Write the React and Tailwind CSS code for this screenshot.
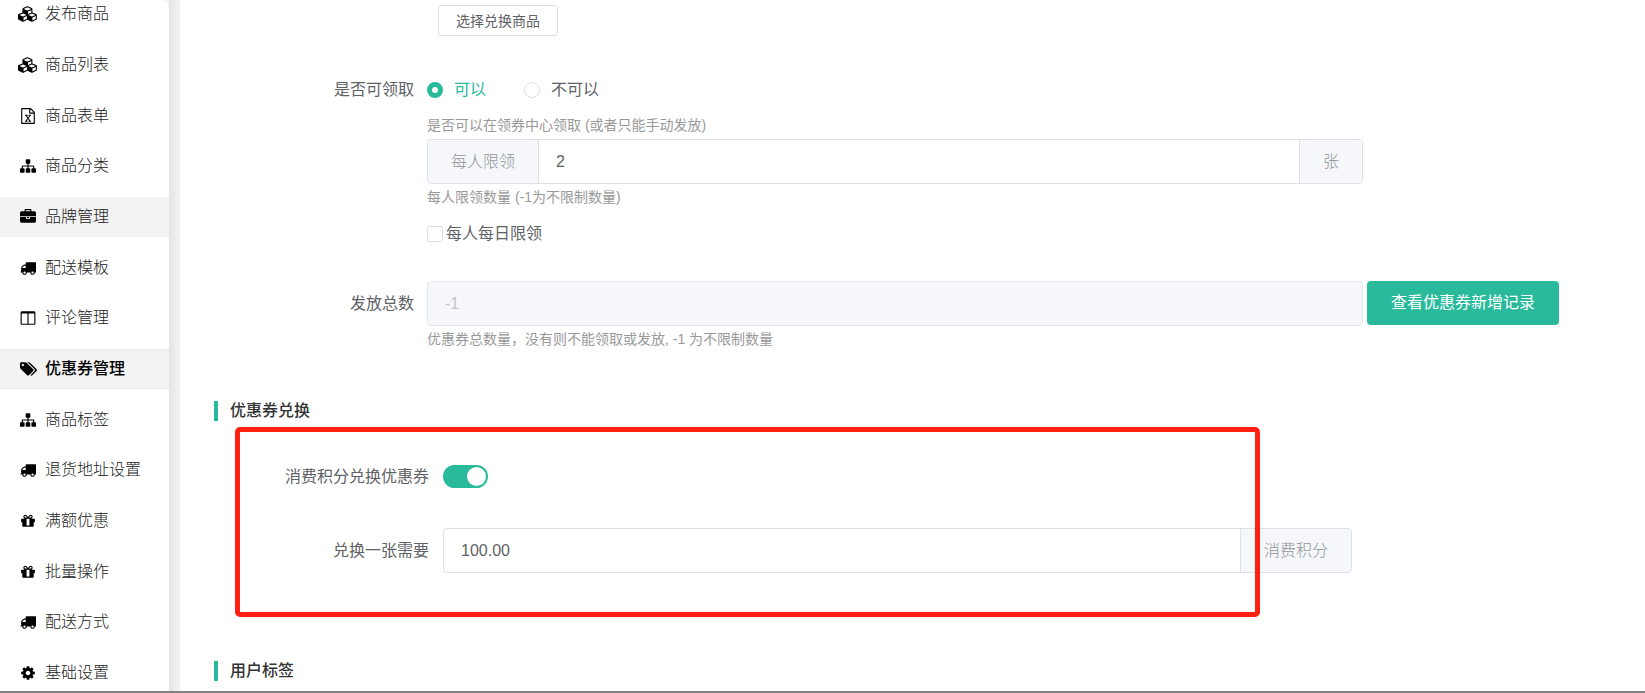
import React, { useState } from "react";

const ICONS = {
  cubes: {
    box: "0 0 2304 1792",
    wide: true,
    d: "M640 1632l384-192v-314l-384 164v342zm-64-454l404-173-404-173-404 173zm1088 454l384-192v-314l-384 164v342zm-64-454l404-173-404-173-404 173zm-448-293l384-165v-266l-384 164v267zm-64-379l441-189-441-189-441 189zm1088 518v416q0 36-19 67t-52 47l-448 224q-25 14-57 14t-57-14l-448-224q-4-2-7-4-2 2-7 4l-448 224q-25 14-57 14t-57-14l-448-224q-33-16-52-47t-19-67v-416q0-38 21.5-70t56.5-48l434-186v-400q0-38 21.5-70t56.5-48l448-192q23-10 50-10t50 10l448 192q35 16 56.5 48t21.5 70v400l434 186q36 16 57 48t21 70z",
  },
  excel: {
    box: "0 0 1792 1792",
    d: "M1596 380q28 28 48 76t20 88v1152q0 40-28 68t-68 28h-1344q-40 0-68-28t-28-68v-1600q0-40 28-68t68-28h896q40 0 88 20t76 48zm-444-244v376h376q-10-29-22-41l-313-313q-12-12-41-22zm384 1528v-1024h-416q-40 0-68-28t-28-68v-416h-768v1536h1280zm-979-234v106h281v-106h-75l103-161q5-7 10-16.5t7.5-13.5 3.5-4h2q1 4 5 10 2 4 4.5 7.5t6 8 6.5 8.5l107 161h-76v106h291v-106h-68l-192-273 195-282h67v-107h-279v107h74l-103 159q-4 7-10 16.5t-9 13.5l-2 3h-2q-1-4-5-10-6-11-17-23l-106-159h76v-107h-290v107h68l189 272-194 283h-68z",
  },
  sitemap: {
    box: "0 0 1792 1792",
    d: "M1792 1248v320q0 40-28 68t-68 28h-320q-40 0-68-28t-28-68v-320q0-40 28-68t68-28h96v-192h-512v192h96q40 0 68 28t28 68v320q0 40-28 68t-68 28h-320q-40 0-68-28t-28-68v-320q0-40 28-68t68-28h96v-192h-512v192h96q40 0 68 28t28 68v320q0 40-28 68t-68 28h-320q-40 0-68-28t-28-68v-320q0-40 28-68t68-28h96v-192q0-52 38-90t90-38h512v-192h-96q-40 0-68-28t-28-68v-320q0-40 28-68t68-28h320q40 0 68 28t28 68v320q0 40-28 68t-68 28h-96v192h512q52 0 90 38t38 90v192h96q40 0 68 28t28 68z",
  },
  briefcase: {
    box: "0 0 1792 1792",
    d: "M640 256h512v-128h-512v128zm1152 640v480q0 66-47 113t-113 47h-1472q-66 0-113-47t-47-113v-480h672v160q0 26 19 45t45 19h320q26 0 45-19t19-45v-160h672zm-768 0v128h-256v-128h256zm768-480v384h-1792v-384q0-66 47-113t113-47h352v-160q0-40 28-68t68-28h576q40 0 68 28t28 68v160h352q66 0 113 47t47 113z",
  },
  truck: {
    box: "0 0 1792 1792",
    d: "M640 1408q0-52-38-90t-90-38-90 38-38 90 38 90 90 38 90-38 38-90zm-384-512h384v-256h-158q-13 0-22 9l-195 195q-9 9-9 22v30zm1280 512q0-52-38-90t-90-38-90 38-38 90 38 90 90 38 90-38 38-90zm256-1088v1024q0 15-4 26.5t-13.5 18.5-16.5 11.5-23.5 6-22.5 2-25.5 0-22.5-.5q0 106-75 181t-181 75-181-75-75-181h-384q0 106-75 181t-181 75-181-75-75-181h-64q-3 0-22.5.5t-25.5 0-22.5-2-23.5-6-16.5-11.5-13.5-18.5-4-26.5q0-26 19-45t45-19v-320q0-8-.5-35t0-38 2.5-34.5 6.5-37 14-30.5 22.5-30l198-198q19-19 50.5-32t58.5-13h160v-192q0-26 19-45t45-19h1024q26 0 45 19t19 45z",
  },
  columns: {
    box: "0 0 1792 1792",
    d: "M224 1536h608v-1152h-640v1120q0 13 9.5 22.5t22.5 9.5zm1376-32v-1120h-640v1152h608q13 0 22.5-9.5t9.5-22.5zm128-1216v1216q0 66-47 113t-113 47h-1344q-66 0-113-47t-47-113v-1216q0-66 47-113t113-47h1344q66 0 113 47t47 113z",
  },
  tags: {
    box: "0 0 2048 1792",
    wide: true,
    d: "M576 448q0-53-37.5-90.5t-90.5-37.5-90.5 37.5-37.5 90.5 37.5 90.5 90.5 37.5 90.5-37.5 37.5-90.5zm1067 576q0 53-37 90l-491 492q-39 37-91 37-53 0-90-37l-715-716q-38-37-64.5-101t-26.5-117v-416q0-52 38-90t90-38h416q53 0 117 26.5t102 64.5l715 714q37 39 37 91zm384 0q0 53-37 90l-491 492q-39 37-91 37-36 0-59-14t-53-45l470-470q37-37 37-90 0-52-37-91l-715-714q-38-38-102-64.5t-117-26.5h224q53 0 117 26.5t102 64.5l715 714q37 39 37 91z",
  },
  gift: {
    box: "0 0 1792 1792",
    d: "M1056 1356v-716h-320v716q0 25 18 38.5t46 13.5h192q28 0 46-13.5t18-38.5zm-456-844h195l-126-161q-26-31-69-31-40 0-68 28t-28 68 28 68 68 28zm688-96q0-40-28-68t-68-28q-43 0-69 31l-125 161h194q40 0 68-28t28-68zm376 256v320q0 14-9 23t-23 9h-96v416q0 40-28 68t-68 28h-1088q-40 0-68-28t-28-68v-416h-96q-14 0-23-9t-9-23v-320q0-14 9-23t23-9h440q-93 0-158.5-65.5t-65.5-158.5 65.5-158.5 158.5-65.5q107 0 168 77l128 165 128-165q61-77 168-77 93 0 158.5 65.5t65.5 158.5-65.5 158.5-158.5 65.5h440q14 0 23 9t9 23z",
  },
  cog: {
    box: "0 0 1792 1792",
    d: "M1152 896q0-106-75-181t-181-75-181 75-75 181 75 181 181 75 181-75 75-181zm512-109v222q0 12-8 23t-20 13l-185 28q-19 54-39 91 35 50 107 138 10 12 10 25t-9 23q-27 37-99 108t-94 71q-12 0-26-9l-138-108q-44 23-91 38-16 136-29 186-7 28-36 28h-222q-14 0-24.5-8.5t-11.5-21.5l-28-184q-49-16-90-37l-141 107q-10 9-25 9-14 0-25-11-126-114-165-168-7-10-7-23 0-12 8-23 15-21 51-66.5t54-70.5q-27-50-41-99l-183-27q-13-2-21-12.5t-8-23.5v-222q0-12 8-23t19-13l186-28q14-46 39-92-40-57-107-138-10-12-10-24 0-10 9-23 26-36 98.5-107.5t94.5-71.5q13 0 26 10l138 107q44-23 91-38 16-136 29-186 7-28 36-28h222q14 0 24.5 8.5t11.5 21.5l28 184q49 16 90 37l142-107q9-9 24-9 13 0 25 10 129 119 165 170 7 8 7 22 0 12-8 23-15 21-51 66.5t-54 70.5q26 50 41 98l183 28q13 2 21 12.5t8 23.5z",
  },
};

const MENU = [
  { icon: "cubes", text: "发布商品" },
  { icon: "cubes", text: "商品列表" },
  { icon: "excel", text: "商品表单" },
  { icon: "sitemap", text: "商品分类" },
  { icon: "briefcase", text: "品牌管理", hovered: true },
  { icon: "truck", text: "配送模板" },
  { icon: "columns", text: "评论管理" },
  { icon: "tags", text: "优惠券管理", active: true },
  { icon: "sitemap", text: "商品标签" },
  { icon: "truck", text: "退货地址设置" },
  { icon: "gift", text: "满额优惠" },
  { icon: "gift", text: "批量操作" },
  { icon: "truck", text: "配送方式" },
  { icon: "cog", text: "基础设置" },
];

function MenuIcon({ name }) {
  const icon = ICONS[name];
  return (
    <span className="flex w-5 shrink-0 justify-center">
      <svg viewBox={icon.box} className={icon.wide ? "h-4 w-5 shrink-0" : "size-4 shrink-0"} fill="currentColor" aria-hidden="true">
        <path d={icon.d} />
      </svg>
    </span>
  );
}

function Sidebar() {
  return (
    <aside className="z-10 w-[169px] shrink-0 overflow-hidden rounded-tr-lg bg-white">
      <ul className="-mt-[6px]">
        {MENU.map((item, i) => (
          <li key={i} className="mb-[11px] nth-[3n]:mb-[10px]">
            <a
              href="#"
              className={
                "flex h-10 items-center gap-[7px] pl-[18px] text-base text-black " +
                (item.active
                  ? "border-y border-[#e6e8ee] bg-[#f3f3f3] font-medium"
                  : item.hovered
                    ? "bg-[#f3f3f3] font-light"
                    : "font-light")
              }
            >
              <MenuIcon name={item.icon} />
              <span className={item.active ? "" : "text-[#222]"}>{item.text}</span>
            </a>
          </li>
        ))}
      </ul>
    </aside>
  );
}

function SectionTitle({ children }) {
  return <h2 className="border-l-4 border-[#29ba9c] pl-3 text-base leading-5 font-medium text-[#333]">{children}</h2>;
}

function Hint({ children }) {
  return <p className="mt-[3px] text-sm leading-5 text-[#999]">{children}</p>;
}

const addon = "flex shrink-0 items-center bg-[#f5f7fa] font-light text-[#909399]";
const field = "flex h-[45px] overflow-hidden rounded border border-[#dcdfe6]";
const radio =
  "size-4 shrink-0 appearance-none rounded-full border border-[#dcdfe6] bg-white checked:border-[5px] checked:border-[#29ba9c]";

export default function App() {
  const [claim, setClaim] = useState("yes");
  const [exchange, setExchange] = useState(true);

  return (
    <div className="flex h-screen flex-col overflow-hidden border-b-2 border-[#808080] bg-white font-['Liberation_Sans','Noto_Sans_CJK_SC',sans-serif] text-base text-[#606266]">
      <div className="flex min-h-0 flex-1 bg-[#f3f3f3]">
        <Sidebar />
        <div className="w-[11px] shrink-0 bg-linear-to-r from-[#e4e4e4] to-[#f3f3f3]" />
        <main className="min-w-0 flex-1 overflow-hidden bg-white pl-[34px]">
          <form onSubmit={(e) => e.preventDefault()}>
            <div className="pt-[5px] pl-[224px]">
              <button type="button" className="flex h-[31px] w-[120px] items-center justify-center rounded-[3px] border border-[#dcdfe6] text-sm">
                选择兑换商品
              </button>
            </div>

            <div className="mt-[42px] flex gap-[13px]">
              <span id="claim-label" className="w-[200px] shrink-0 text-right">是否可领取</span>
              <div className="min-w-0 flex-1 pr-[282px]">
                <div role="radiogroup" aria-labelledby="claim-label" className="flex gap-[38px]">
                  <label className={"flex items-center gap-[11px] " + (claim === "yes" ? "text-[#29ba9c]" : "")}>
                    <input type="radio" name="claim" className={radio} checked={claim === "yes"} onChange={() => setClaim("yes")} />
                    可以
                  </label>
                  <label className={"flex items-center gap-[11px] " + (claim === "no" ? "text-[#29ba9c]" : "")}>
                    <input type="radio" name="claim" className={radio} checked={claim === "no"} onChange={() => setClaim("no")} />
                    不可以
                  </label>
                </div>
                <p className="mt-[13px] mb-1 text-sm leading-5 text-[#999]">是否可以在领券中心领取 (或者只能手动发放)</p>
                <div className={field}>
                  <label htmlFor="per-person" className={addon + " border-r border-[#dcdfe6] px-[23px]"}>每人限领</label>
                  <input id="per-person" defaultValue="2" className="min-w-0 flex-1 px-[17px] outline-none" />
                  <span className={addon + " border-l border-[#dcdfe6] px-[23px]"}>张</span>
                </div>
                <Hint>每人限领数量 (-1为不限制数量)</Hint>
                <label className="mt-[15px] flex items-center gap-[3px]">
                  <input type="checkbox" className="size-4 appearance-none rounded-[2px] border border-[#dcdfe6] bg-white checked:bg-[#29ba9c]" />
                  每人每日限领
                </label>
              </div>
            </div>

            <div className="mt-[35px] flex gap-[13px]">
              <label htmlFor="total" className="w-[200px] shrink-0 text-right leading-[45px]">发放总数</label>
              <div className="min-w-0 flex-1 pr-[86px]">
                <div className="flex gap-1">
                  <input
                    id="total"
                    disabled
                    defaultValue="-1"
                    className="h-[45px] min-w-0 flex-1 rounded border border-[#e4e7ed] bg-[#f5f7fa] px-[17px] text-[#c0c4cc]"
                  />
                  <button type="button" className="h-11 w-[192px] shrink-0 rounded bg-[#29ba9c] text-white">查看优惠券新增记录</button>
                </div>
                <Hint>优惠券总数量，没有则不能领取或发放, -1 为不限制数量</Hint>
              </div>
            </div>

            <section className="relative mt-[52px]">
              <SectionTitle>优惠券兑换</SectionTitle>
              <div className="mt-[44px] flex items-center gap-[14px]">
                <label htmlFor="exchange" className="w-[215px] shrink-0 text-right leading-[23px]">消费积分兑换优惠券</label>
                <input
                  id="exchange"
                  type="checkbox"
                  role="switch"
                  checked={exchange}
                  onChange={(e) => setExchange(e.target.checked)}
                  className="flex h-[23px] w-[45px] appearance-none items-center rounded-full bg-[#dcdfe6] px-[2px] before:size-[19px] before:rounded-full before:bg-white checked:justify-end checked:bg-[#29ba9c]"
                />
              </div>
              <div className="mt-10 flex gap-[14px] pr-[293px]">
                <label htmlFor="cost" className="w-[215px] shrink-0 text-right leading-[45px]">兑换一张需要</label>
                <div className={field + " min-w-0 flex-1"}>
                  <input id="cost" defaultValue="100.00" className="min-w-0 flex-1 px-[17px] outline-none" />
                  <span className={addon + " border-l border-[#dcdfe6] px-[23px]"}>消费积分</span>
                </div>
              </div>
              {/* highlight frame drawn over the exchange settings */}
              <div className="pointer-events-none absolute top-[26px] right-[385px] -bottom-11 left-[21px] rounded-[5px] border-[5px] border-[#ff2011]" />
            </section>

            <section className="mt-[88px]">
              <SectionTitle>用户标签</SectionTitle>
            </section>
          </form>
        </main>
      </div>
    </div>
  );
}
